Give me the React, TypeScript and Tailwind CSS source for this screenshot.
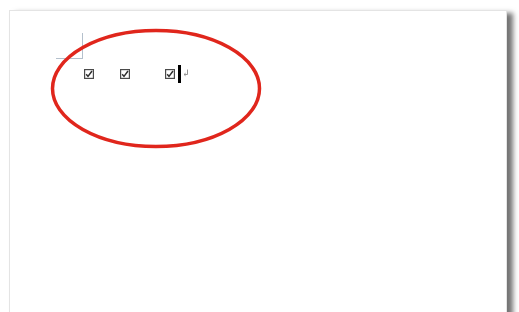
import React from 'react';

const CheckGlyph = () => (
  <svg width="10" height="10" viewBox="0 0 10 10" className="block">
    <rect x="0.6" y="0.6" width="8.8" height="8.8" fill="none" stroke="#4a4a4a" strokeWidth="1.2" />
    <path d="M2.2 5.2 L4 7.4 L8 2" fill="none" stroke="#2e2e2e" strokeWidth="1.5" />
  </svg>
);

const ReturnMark = () => (
  <svg width="6" height="8" viewBox="0 0 6 8" className="block">
    <path d="M4.5 0.5 V5.5 H1.2" fill="none" stroke="#8a8a8a" strokeWidth="0.9" />
    <path d="M2.6 4.2 L1 5.5 L2.6 6.8" fill="none" stroke="#8a8a8a" strokeWidth="0.9" />
  </svg>
);

export default function App() {
  return (
    <div className="w-[519px] h-[312px] bg-white overflow-hidden relative font-['Liberation_Sans',sans-serif]">
      <div className="ml-[9px] mt-[10px] w-[498px] h-[330px] bg-white border border-[#e4e4e4] shadow-[6px_3px_5px_rgba(0,0,0,0.55)] relative">
        <div className="pt-[22px] pl-[46px]">
          <div className="w-[27px] h-[26px] border-r border-b border-[#b4c0cc]" />
          <div className="flex items-center mt-[7px] ml-[28px] h-[16px]">
            <CheckGlyph />
            <div className="ml-[26px]">
              <CheckGlyph />
            </div>
            <div className="ml-[35px] flex items-center">
              <CheckGlyph />
              <div className="ml-[3px] w-[2.5px] h-[18px] bg-black" />
              <div className="ml-[2px] -mt-[2px]">
                <ReturnMark />
              </div>
            </div>
          </div>
        </div>
      </div>
      <svg className="absolute left-0 top-0 pointer-events-none" width="519" height="312">
        <ellipse cx="156" cy="88.5" rx="103.5" ry="58" fill="none" stroke="#e0261c" strokeWidth="3.5" />
      </svg>
    </div>
  );
}
